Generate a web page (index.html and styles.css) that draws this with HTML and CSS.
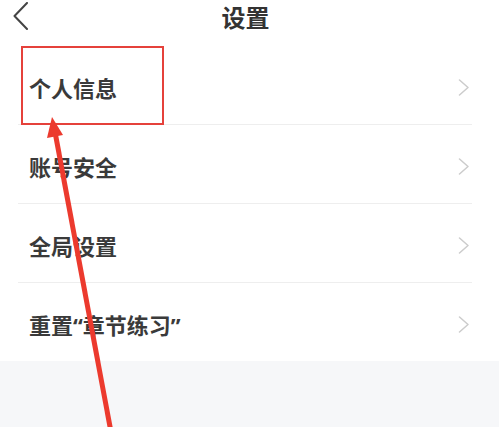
FILE: index.html
```html
<!DOCTYPE html>
<html lang="zh-CN">
	<head>
		<meta charset="UTF-8" />
		<meta name="viewport" content="width=device-width, initial-scale=1.0" />
		<title>设置</title>
		<link rel="stylesheet" href="styles.css">
	</head>
	<body>
		<div class="screen">
			<div class="panel">
				<div class="header">
					<a class="back" href="#">
						<svg width="16" height="28" viewBox="0 0 16 28">
							<polyline points="14,1 1.5,14 14,27" fill="none" stroke="#444" stroke-width="2" stroke-linecap="round" stroke-linejoin="round" />
						</svg>
					</a>
					<h1>设置</h1>
				</div>

				<div class="list">
					<a class="list__item" href="#">
						<span>个人信息</span>
						<svg class="chevron" width="12" height="17" viewBox="0 0 12 17"><polyline points="1.5,1 10,8.5 1.5,16" /></svg>
					</a>
					<a class="list__item" href="#">
						<span>账号安全</span>
						<svg class="chevron" width="12" height="17" viewBox="0 0 12 17"><polyline points="1.5,1 10,8.5 1.5,16" /></svg>
					</a>
					<a class="list__item" href="#">
						<span>全局设置</span>
						<svg class="chevron" width="12" height="17" viewBox="0 0 12 17"><polyline points="1.5,1 10,8.5 1.5,16" /></svg>
					</a>
					<a class="list__item" href="#">
						<span>重置“章节练习”</span>
						<svg class="chevron" width="12" height="17" viewBox="0 0 12 17"><polyline points="1.5,1 10,8.5 1.5,16" /></svg>
					</a>
				</div>
			</div>

			<div class="footer"></div>

			<!-- annotation drawn over the screenshot -->
			<div class="mark"></div>
			<svg class="pointer" width="499" height="427" viewBox="0 0 499 427">
				<line x1="55" y1="132" x2="111" y2="432" stroke="#ec3a2e" stroke-width="5" />
				<polygon points="52,117 47,138 63,135" fill="#ec3a2e" />
			</svg>
		</div>
	</body>
</html>
```

FILE: styles.css
```css
* {
	box-sizing: border-box;
	margin: 0;
	padding: 0;
}

body {
	font-family: "Noto Sans", "Noto Sans CJK SC", sans-serif;
	background-color: #f6f7f9;
	color: #3a3a3a;
}

.screen {
	position: relative;
	width: 499px;
	height: 427px;
	display: flex;
	flex-direction: column;
	overflow: hidden;
}

.panel {
	background-color: white;
}

.header {
	position: relative;
	height: 46px;
	display: flex;
	align-items: center;
	justify-content: center;
}

.header h1 {
	font-size: 24px;
	font-weight: bold;
	line-height: 1;
	color: #333;
	margin-top: -10px;
	margin-left: -8px;
}

.back {
	position: absolute;
	left: 13px;
	top: 2px;
	display: block;
}

.list {
	margin: 0 27px 0 18px;
}

.list__item {
	display: flex;
	align-items: center;
	justify-content: space-between;
	height: 79px;
	padding: 4px 2px 0 11px;
	border-bottom: 1px solid #eeeeee;
	text-decoration: none;
	color: #3a3a3a;
	font-size: 22px;
	font-weight: bold;
}

.list__item:last-child {
	height: 78px;
	border-bottom: none;
}

.chevron polyline {
	fill: none;
	stroke: #cccccc;
	stroke-width: 1.5;
	stroke-linecap: round;
	stroke-linejoin: round;
}

.footer {
	flex: 1;
	background-color: #f6f7f9;
}

.mark {
	position: absolute;
	left: 21px;
	top: 46px;
	width: 143px;
	height: 79px;
	border: 2px solid #e5413b;
}

.pointer {
	position: absolute;
	left: 0;
	top: 0;
}
```
